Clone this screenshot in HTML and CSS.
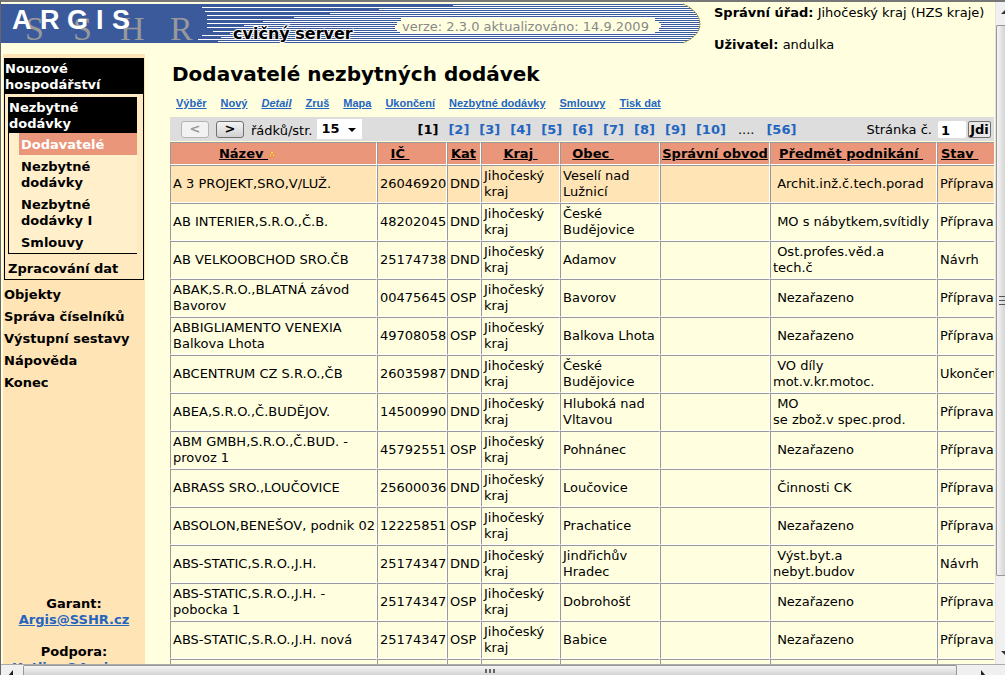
FILE: index.html
```html
<!DOCTYPE html>
<html lang="cs">
<head>
<meta charset="utf-8">
<title>ARGIS – Dodavatelé nezbytných dodávek</title>
<link rel="stylesheet" href="styles.css">
</head>
<body>
<div class="window">
  <div class="view">
    <header class="top">
      <svg class="banner" width="700" height="39" viewBox="0 0 700 39" role="img" aria-label="ARGIS SSHR">
        <defs>
          <clipPath id="cap"><path d="M0 0H683C695 5 700 13 700 20S695 34 683 39H0Z"/></clipPath>
        </defs>
        <g clip-path="url(#cap)">
          <rect width="700" height="39" fill="#3a5a9c"/>
          <path stroke="#fff" d="M453 1.500H700M202 3.500H700M379 5.500H700M205 7.500H700M330 9.500H700M207 11.500H700M294 13.500H700M207 15.500H700M263 17.500H700M207 19.500H700M244 21.500H700M207 23.500H700M238 25.500H700M213 27.500H700M230 29.500H700M202 31.500H700M221 33.500H700M198 35.500H700M218 37.500H700"/>
        </g>
        <path d="M683 0C695 5 700 13 700 20S695 34 683 39" fill="none" stroke="#a08a18" stroke-dasharray="2 1"/>
        <path d="M401 14H655V17H659V19H661V24H659V27H655V29H400V27H397V25H395V21H397V18H401Z" fill="#ffffe0"/>
        <g class="sshr"><text x="25" y="36">S</text><text x="73" y="36">S</text><text x="120" y="36">H</text><text x="170" y="36">R</text></g>
        <g class="argis"><text x="12" y="25">A</text><text x="40" y="25">R</text><text x="67" y="25">G</text><text x="96" y="25">I</text><text x="112" y="25">S</text></g>
        <text class="training" x="233" y="35">cvičný server</text>
        <text class="version" x="402" y="27">verze: 2.3.0 aktualizováno: 14.9.2009</text>
      </svg>
      <div class="info">
        <p><b>Správní úřad:</b> Jihočeský kraj (HZS kraje)</p>
        <p><b>Uživatel:</b> andulka</p>
      </div>
    </header>
    <div class="body">
      <aside class="side">
        <nav>
          <div class="group">
            <div class="head">Nouzové hospodářství</div>
            <div class="sub">
              <div class="head">Nezbytné dodávky</div>
              <ul class="leafs">
                <li><a class="current" href="#">Dodavatelé</a></li>
                <li><a href="#">Nezbytné dodávky</a></li>
                <li><a href="#">Nezbytné dodávky I</a></li>
                <li><a href="#">Smlouvy</a></li>
              </ul>
            </div>
            <a class="data" href="#">Zpracování dat</a>
          </div>
          <ul class="roots">
            <li><a href="#">Objekty</a></li>
            <li><a href="#">Správa číselníků</a></li>
            <li><a href="#">Výstupní sestavy</a></li>
            <li><a href="#">Nápověda</a></li>
            <li><a href="#">Konec</a></li>
          </ul>
        </nav>
        <div class="contacts">
          <p>Garant:<br><a href="#">Argis@SSHR.cz</a></p>
          <p>Podpora:<br><a href="#">Hotline@Argis.cz</a></p>
        </div>
      </aside>
      <main class="main">
        <h1>Dodavatelé nezbytných dodávek</h1>
        <div class="actions">
          <a href="#">Výběr</a><a href="#">Nový</a><a class="it" href="#">Detail</a><a href="#">Zruš</a><a href="#">Mapa</a><a href="#">Ukončení</a><a href="#">Nezbytné dodávky</a><a href="#">Smlouvy</a><a href="#">Tisk dat</a>
        </div>
        <div class="pager">
          <button class="step" type="button" disabled>&lt;</button>
          <button class="step" type="button">&gt;</button>
          <label class="rows" for="rows">řádků/str.</label>
          <span class="pick">
            <select id="rows"><option>15</option></select>
            <svg width="8" height="4" viewBox="0 0 8 4"><path d="M0 0H8L4 4Z"/></svg>
          </span>
          <div class="pages">
            <b>[1]</b><a href="#">[2]</a><a href="#">[3]</a><a href="#">[4]</a><a href="#">[5]</a><a href="#">[6]</a><a href="#">[7]</a><a href="#">[8]</a><a href="#">[9]</a><a href="#">[10]</a><span>....</span><a href="#">[56]</a>
          </div>
          <label class="goto" for="page">Stránka č.</label>
          <input id="page" type="text" value="1">
          <button class="go" type="button">Jdi</button>
        </div>
        <table>
          <colgroup><col class="c1"><col class="c2"><col class="c3"><col class="c4"><col class="c5"><col class="c6"><col class="c7"><col class="c8"></colgroup>
          <thead>
            <tr><th class="name"><a href="#">Název&nbsp;</a><svg width="8" height="9" viewBox="0 0 8 9"><path d="M1 8L3.500 2H4.500L7 8H5.500L4 4L2.500 8Z" fill="#fff3b0" stroke="#e8860c" stroke-width=".7"/></svg></th><th class="ic"><a href="#">IČ&nbsp;</a></th><th class="kat"><a href="#">Kat</a></th><th><a href="#">Kraj&nbsp;</a></th><th class="obec"><a href="#">Obec&nbsp;</a></th><th><a href="#">Správní obvod</a></th><th class="field"><a href="#">Předmět podnikání&nbsp;</a></th><th class="state"><a href="#">Stav&nbsp;</a></th></tr>
          </thead>
          <tbody>
            <tr class="sel"><td>A 3 PROJEKT,SRO,V/LUŽ.</td><td>26046920</td><td>DND</td><td>Jihočeský kraj</td><td>Veselí nad Lužnicí</td><td></td><td>&nbsp;Archit.inž.č.tech.porad</td><td>Příprava</td></tr>
            <tr><td>AB INTERIER,S.R.O.,Č.B.</td><td>48202045</td><td>DND</td><td>Jihočeský kraj</td><td>České Budějovice</td><td></td><td>&nbsp;MO s nábytkem,svítidly</td><td>Příprava</td></tr>
            <tr><td>AB VELKOOBCHOD SRO.ČB</td><td>25174738</td><td>DND</td><td>Jihočeský kraj</td><td>Adamov</td><td></td><td>&nbsp;Ost.profes.věd.a<br>tech.č</td><td>Návrh</td></tr>
            <tr><td>ABAK,S.R.O.,BLATNÁ závod Bavorov</td><td>00475645</td><td>OSP</td><td>Jihočeský kraj</td><td>Bavorov</td><td></td><td>&nbsp;Nezařazeno</td><td>Příprava</td></tr>
            <tr><td>ABBIGLIAMENTO VENEXIA Balkova Lhota</td><td>49708058</td><td>OSP</td><td>Jihočeský kraj</td><td>Balkova Lhota</td><td></td><td>&nbsp;Nezařazeno</td><td>Příprava</td></tr>
            <tr><td>ABCENTRUM CZ S.R.O.,ČB</td><td>26035987</td><td>DND</td><td>Jihočeský kraj</td><td>České Budějovice</td><td></td><td>&nbsp;VO díly<br>mot.v.kr.motoc.</td><td>Ukončen</td></tr>
            <tr><td>ABEA,S.R.O.,Č.BUDĚJOV.</td><td>14500990</td><td>DND</td><td>Jihočeský kraj</td><td>Hluboká nad Vltavou</td><td></td><td>&nbsp;MO<br>se zbož.v spec.prod.</td><td>Příprava</td></tr>
            <tr><td>ABM GMBH,S.R.O.,Č.BUD. -<br>provoz 1</td><td>45792551</td><td>OSP</td><td>Jihočeský kraj</td><td>Pohnánec</td><td></td><td>&nbsp;Nezařazeno</td><td>Příprava</td></tr>
            <tr><td>ABRASS SRO.,LOUČOVICE</td><td>25600036</td><td>DND</td><td>Jihočeský kraj</td><td>Loučovice</td><td></td><td>&nbsp;Činnosti CK</td><td>Příprava</td></tr>
            <tr><td>ABSOLON,BENEŠOV, podnik 02</td><td>12225851</td><td>OSP</td><td>Jihočeský kraj</td><td>Prachatice</td><td></td><td>&nbsp;Nezařazeno</td><td>Příprava</td></tr>
            <tr><td>ABS-STATIC,S.R.O.,J.H.</td><td>25174347</td><td>DND</td><td>Jihočeský kraj</td><td>Jindřichův Hradec</td><td></td><td>&nbsp;Výst.byt.a<br>nebyt.budov</td><td>Návrh</td></tr>
            <tr><td>ABS-STATIC,S.R.O.,J.H. -<br>pobocka 1</td><td>25174347</td><td>OSP</td><td>Jihočeský kraj</td><td>Dobrohošť</td><td></td><td>&nbsp;Nezařazeno</td><td>Příprava</td></tr>
            <tr><td>ABS-STATIC,S.R.O.,J.H. nová</td><td>25174347</td><td>OSP</td><td>Jihočeský kraj</td><td>Babice</td><td></td><td>&nbsp;Nezařazeno</td><td>Příprava</td></tr>
            <tr><td></td><td></td><td></td><td></td><td></td><td></td><td></td><td></td></tr>
          </tbody>
        </table>
      </main>
    </div>
  </div>
  <div class="vbar">
    <svg width="10" height="22" viewBox="0 0 10 22"><path d="M5 12L10 7V12Z" fill="#333"/></svg>
    <div class="vthumb"><svg width="6" height="9" viewBox="0 0 6 9"><path d="M0 .5H6M0 4.500H6M0 8.500H6" stroke="#555"/></svg></div>
    <svg width="10" height="22" viewBox="0 0 10 22"><path d="M5 9H10V14Z" fill="#333"/></svg>
  </div>
  <div class="hbar">
    <svg width="22" height="11" viewBox="0 0 22 11"><path d="M12 5V11H7Z" fill="#222"/></svg>
    <div class="hthumb"><svg width="11" height="6" viewBox="0 0 11 6"><path d="M1 1V5M5 1V5M9 1V5" stroke="#666" stroke-width="2"/></svg></div>
    <svg width="48" height="11" viewBox="0 0 48 11"><path d="M24 5V11H29Z" fill="#222"/></svg>
  </div>
</div>
</body>
</html>
```
FILE: styles.css
```css
* { box-sizing: border-box; }
body {
  margin: 0;
  background: #ffffe0;
  color: #000;
  font: 13px/16px "DejaVu Sans", Verdana, sans-serif;
}
p, h1, ul { margin: 0; padding: 0; }
ul { list-style: none; }
a { color: inherit; }
.window {
  display: grid;
  grid-template: minmax(0, 1fr) 11px / minmax(0, 1fr) 10px;
  height: 100vh;
  border-top: 2px solid #777;
  border-left: 1px solid #666;
  overflow: hidden;
}
.view {
  display: flex;
  flex-direction: column;
  min-width: 0;
  overflow: hidden;
  padding: 2px 1px 0 0;
}
.top { display: flex; gap: 14px; height: 50px; }
.banner { flex: none; margin-left: -1px; overflow: visible; }
.info { display: flex; flex-direction: column; gap: 16px; padding-top: 1px; white-space: nowrap; }
.argis { font: bold 27px "Liberation Sans", sans-serif; fill: #fff; }
.sshr { font: 34px "Liberation Serif", serif; fill: #999; }
.training {
  font: bold 16px "DejaVu Sans", sans-serif;
  paint-order: stroke;
  stroke: #fff;
  stroke-width: 2px;
}
.version { font: 13px "DejaVu Sans", sans-serif; fill: #888; }

.body { display: flex; flex: 1; gap: 25px; min-height: 0; }
.side {
  flex: none;
  width: 142px;
  margin-left: 2px;
  padding: 4px 1px 0;
  background: #ffe4b5;
  font-weight: bold;
  overflow: hidden;
}
.side nav a { display: block; text-decoration: none; }
.group { border: 1px solid #000; border-top: 0; background: #ffe9c0; }
.head { padding: 3px 0 1px; background: #000; color: #fff; }
.sub {
  margin: 3px 6px 0 3px;
  border: solid #000;
  border-width: 0 0 1px 1px;
  background: #ffefcb;
}
.leafs { padding-left: 10px; }
.leafs a { padding: 4px 2px 2px; }
.leafs .current { background: #e9967a; color: #fff; }
.data { padding: 7px 0 2px 3px; }
.roots { padding: 3px 0 0; }
.roots a { padding: 4px 0 2px; }
.contacts {
  display: flex;
  flex-direction: column;
  gap: 16px;
  padding-top: 203px;
  text-align: center;
}
.contacts a { color: #2465c0; }

.main { flex: 1; min-width: 0; overflow: hidden; }
h1 { padding: 7px 0 1px 2px; font-size: 20px; line-height: 26px; white-space: nowrap; }
.actions {
  display: flex;
  gap: 14px;
  padding: 7px 0 6px 6px;
  font: bold 11px/16px "Liberation Sans", Arial, sans-serif;
  color: #2465c0;
  white-space: nowrap;
}
.it { font-style: italic; }
.pager {
  display: flex;
  align-items: center;
  height: 24px;
  padding: 0 3px 0 11px;
  background: #ddd;
  white-space: nowrap;
}
button, input, select { font: bold 13px/16px "DejaVu Sans", Verdana, sans-serif; color: #000; }
.step {
  width: 28px;
  height: 17px;
  margin-right: 7px;
  padding: 0;
  border: 1px solid #707070;
  border-radius: 3px;
  background: linear-gradient(#f4f4f4, #d2d2d2);
  line-height: 14px;
}
.step:disabled { border-color: #b4b4b4; background: #f2f2f2; color: #999; }
.rows { padding-top: 3px; }
.pick { position: relative; margin-left: 5px; }
.pick select {
  display: block;
  appearance: none;
  width: 45px;
  height: 20px;
  padding: 0 4px;
  border: 0;
  background: #fff;
}
.pick svg { position: absolute; right: 6px; top: 9px; pointer-events: none; }
.pages { display: flex; gap: 10px; margin-left: 55px; padding-top: 1px; color: #2465c0; font-weight: bold; }
.pages a { text-decoration: none; }
.pages b, .pages span { color: #000; }
.pages span { padding: 0 2px; font-weight: normal; }
.goto { margin-left: auto; padding-top: 1px; }
.pager input {
  width: 28px;
  height: 17px;
  margin: 0 2px 0 6px;
  padding: 2px 3px 0;
  border: 0;
  border-radius: 2px;
}
.go {
  width: 23px;
  height: 17px;
  padding: 0;
  border: 1px solid #707070;
  border-radius: 2px;
  background: #e8e8e8;
  line-height: 15px;
}

table {
  width: 868px;
  margin-top: 1px;
  table-layout: fixed;
  border-collapse: separate;
  border-spacing: 0;
}
.c1 { width: 207px; }
.c2 { width: 70px; }
.c3 { width: 34px; }
.c4 { width: 79px; }
.c5 { width: 100px; }
.c6 { width: 110px; }
.c7 { width: 167px; }
th, td {
  padding: 2px 0 2px 2px;
  border: 1px solid #999;
  border-right-color: #fff;
  border-bottom-color: #fff;
  text-align: left;
}
td { height: 38px; padding-left: 2px; }
th { height: 23px; padding: 0; background: #e9967a; text-align: center; white-space: nowrap; }
th.name { padding-right: 100px; text-align: right; }
th.ic { padding-right: 24px; }
th.obec { padding-right: 34px; }
th.kat, th.state { padding-left: 3px; text-align: left; }
th.field { padding-left: 8px; text-align: left; }
.sel td { background: #ffe4b5; }

.vbar { display: flex; flex-direction: column; background: #f0f0f0; border-left: 1px solid #e3e3e3; }
.vthumb {
  display: flex;
  align-items: center;
  justify-content: flex-end;
  flex: 0 1 551px;
  margin: 1px 0 auto;
  border: 1px solid #979797;
  border-right: 0;
  border-radius: 2px 0 0 2px;
  background: linear-gradient(90deg, #f5f5f5, #d4d4d4);
}
.hbar { grid-column: 1 / -1; display: flex; border-top: 1px solid #aaa; background: #f0f0f0; }
.hthumb {
  display: flex;
  align-items: center;
  justify-content: center;
  flex: 1;
  border: 1px solid #979797;
  border-bottom: 0;
  border-radius: 2px 2px 0 0;
  background: linear-gradient(#f5f5f5, #d4d4d4);
}
```
